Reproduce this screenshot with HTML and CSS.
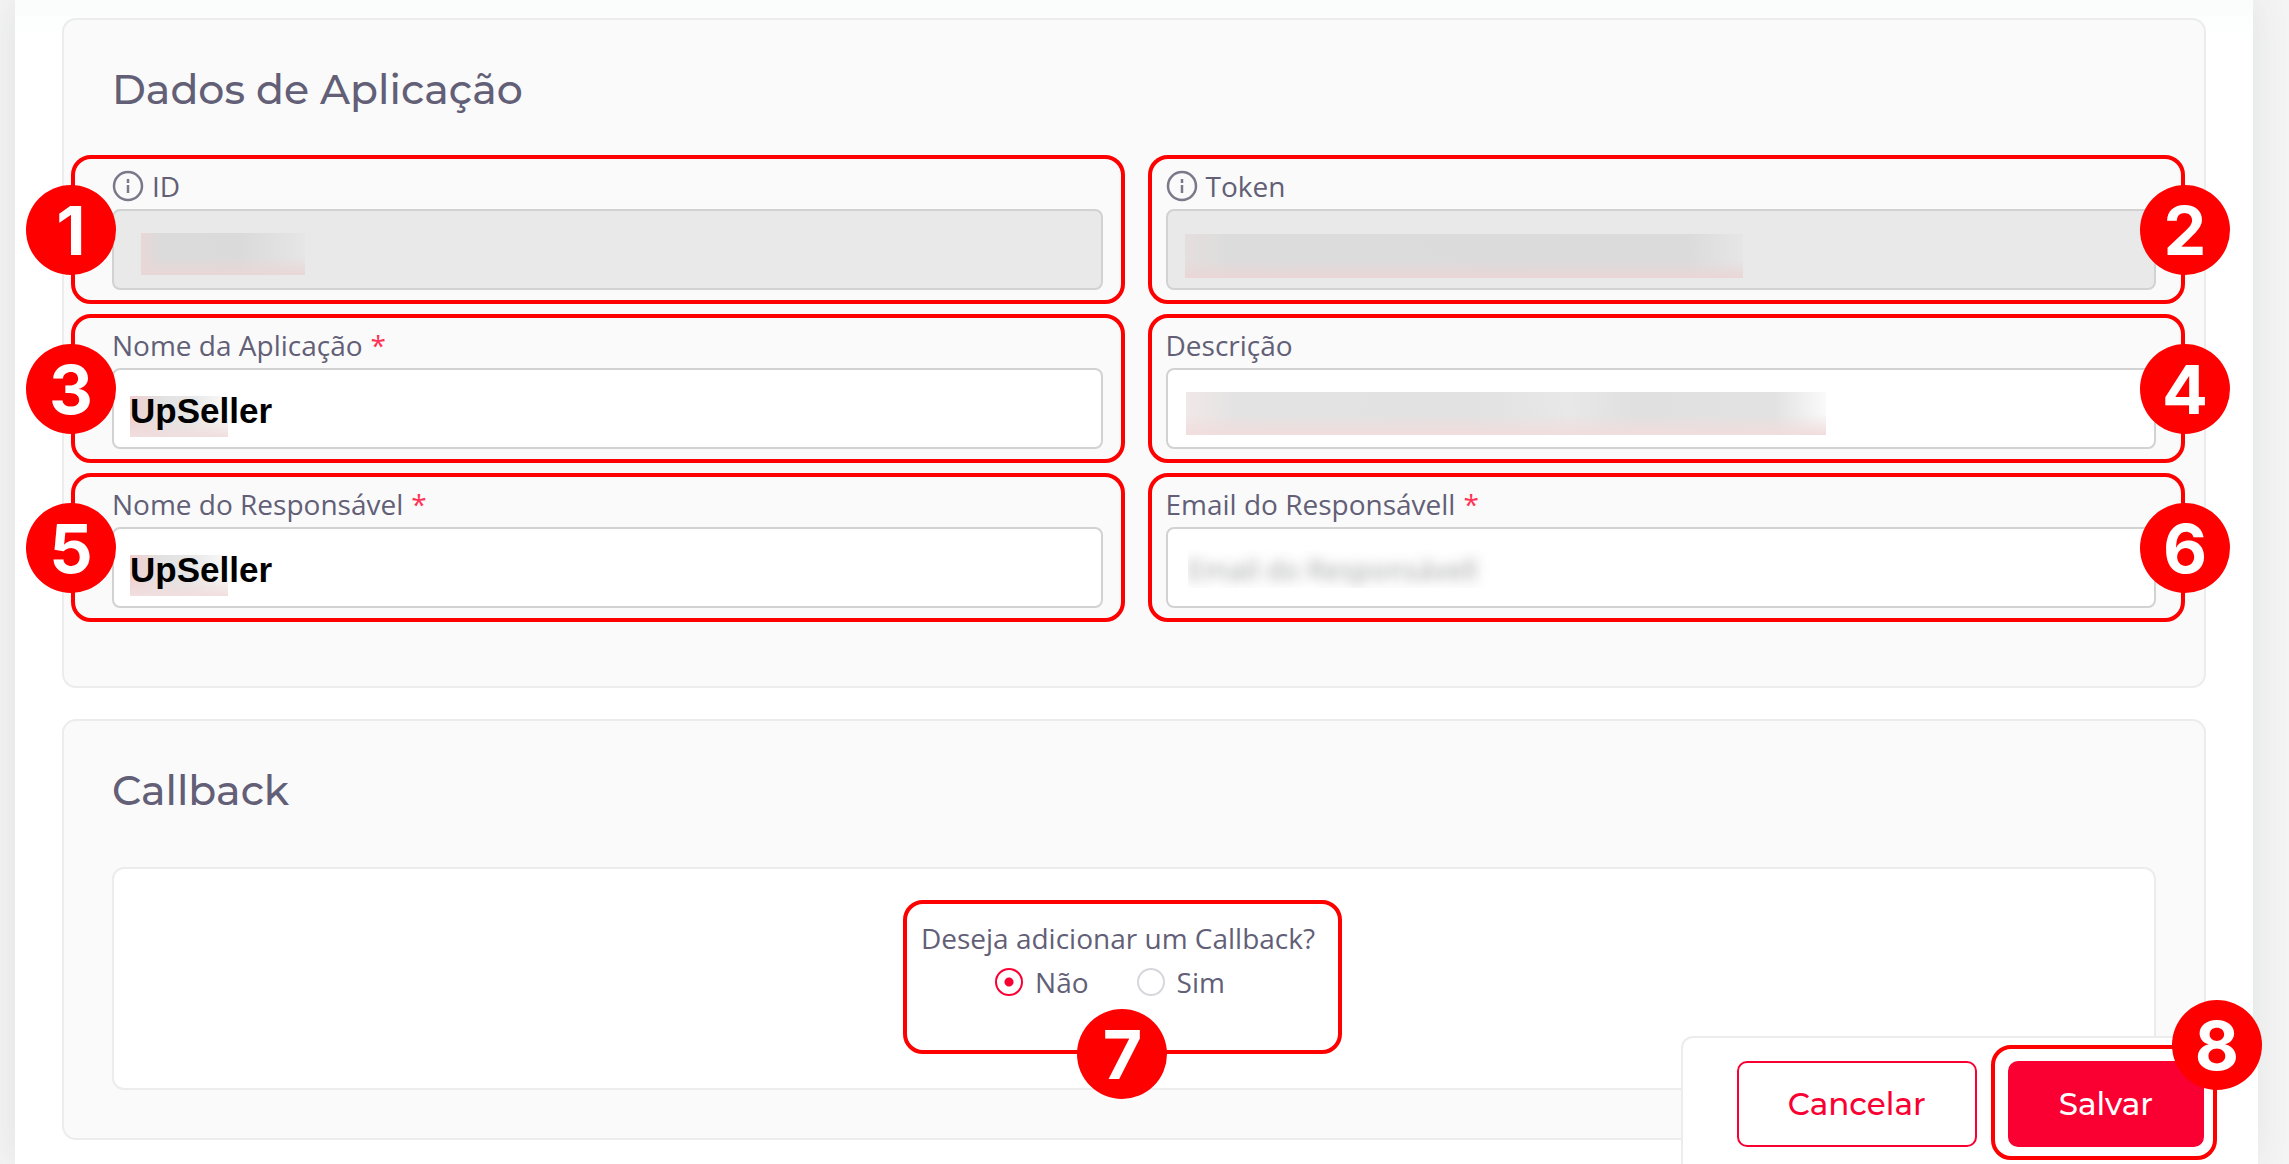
FILE: index.html
```
<!DOCTYPE html>
<html lang="pt-BR">
<head>
  <meta charset="utf-8">
  <meta name="viewport" content="width=device-width, initial-scale=1">
  <title>Dados de Aplicação</title>
  <link rel="stylesheet" href="styles.css">
</head>
<body>
  <form class="page">
    <section class="panel panel-dados">
      <h2>Dados de Aplicação</h2>
      <div class="fields">
        <div class="field">
          <label for="id">
            <svg class="info" viewBox="0 0 32 32"><circle cx="16" cy="16" r="14"/><path d="M16 15v8M16 9v4"/></svg>
            ID
          </label>
          <input type="text" id="id" class="hidden-id" disabled>
          <div class="mark mark-left"><span class="badge">1</span></div>
        </div>
        <div class="field">
          <label for="token">
            <svg class="info" viewBox="0 0 32 32"><circle cx="16" cy="16" r="14"/><path d="M16 15v8M16 9v4"/></svg>
            Token
          </label>
          <input type="text" id="token" class="hidden-token" disabled>
          <div class="mark mark-right"><span class="badge">2</span></div>
        </div>
        <div class="field">
          <label for="nome">Nome da Aplicação <span class="required">*</span></label>
          <input type="text" id="nome" class="hidden-nome" value="UpSeller">
          <div class="mark mark-left"><span class="badge">3</span></div>
        </div>
        <div class="field">
          <label for="descricao">Descrição</label>
          <input type="text" id="descricao" class="hidden-descricao">
          <div class="mark mark-right"><span class="badge">4</span></div>
        </div>
        <div class="field">
          <label for="responsavel">Nome do Responsável <span class="required">*</span></label>
          <input type="text" id="responsavel" class="hidden-nome" value="UpSeller">
          <div class="mark mark-left"><span class="badge">5</span></div>
        </div>
        <div class="field">
          <label for="email">Email do Responsávell <span class="required">*</span></label>
          <input type="email" id="email" placeholder="Email do Responsávell">
          <div class="mark mark-right"><span class="badge">6</span></div>
        </div>
      </div>
    </section>

    <section class="panel panel-callback">
      <h2>Callback</h2>
      <div class="callback">
        <fieldset class="question">
          <legend>Deseja adicionar um Callback?</legend>
          <div class="options">
            <label><input type="radio" name="callback" value="nao" checked>Não</label>
            <label><input type="radio" name="callback" value="sim">Sim</label>
          </div>
          <div class="mark mark-question"><span class="badge">7</span></div>
        </fieldset>
      </div>
    </section>

    <div class="actions">
      <button type="button" class="btn btn-cancel">Cancelar</button>
      <div class="save">
        <button type="submit" class="btn btn-save">Salvar</button>
        <div class="mark mark-save"><span class="badge">8</span></div>
      </div>
    </div>
  </form>
</body>
</html>
```
FILE: styles.css
```
* {
  box-sizing: border-box;
}
body {
  margin: 0;
  padding: 0 36px 0 15px;
  overflow-x: hidden;
  background-color: #f4f4f4;
  color: #625f77;
  font-family: "Segoe UI", "Open Sans", "Noto Sans", sans-serif;
  font-size: 28px;
  line-height: 40px;
}
.page {
  min-height: 100vh;
  padding: 18px 47px 20px;
  background: #fff linear-gradient(#fafcfb, #fff 40px) no-repeat;
  box-shadow: 0 0 36px rgba(60,70,65,.1);
}
.panel {
  padding: 45px 48px 48px;
  border: 2px solid #ececec;
  border-radius: 14px;
  background-color: #fafafa;
}
.panel-dados {
  padding-bottom: 78px;
}
.panel-callback {
  margin-top: 31px;
}
h2 {
  margin: 0 0 53px;
  font-family: Montserrat, Inter, sans-serif;
  font-size: 41px;
  font-weight: 500;
  line-height: 48px;
}

/* form fields */
.fields {
  display: grid;
  grid-template-columns: 1fr 1fr;
  gap: 35px 63px;
}
.field {
  position: relative;
}
.field label {
  display: flex;
  align-items: center;
  gap: 8px;
  margin-bottom: 3px;
}
.info {
  width: 32px;
  height: 32px;
  fill: none;
  stroke: #7b788a;
  stroke-width: 2.5;
}
.required {
  color: #ff3355;
}
.field input {
  display: block;
  width: 100%;
  height: 81px;
  padding: 4px 16px 0;
  border: 2px solid #d2d2d2;
  border-radius: 8px;
  background-color: #fff;
  background-repeat: no-repeat;
  color: #000;
  font-family: Arial, "Liberation Sans", sans-serif;
  font-size: 35px;
  font-weight: bold;
}
.field input:disabled {
  background-color: #e9e9e9;
}
.field input[type=email] {
  padding: 0 20px;
}
.field input::placeholder {
  color: transparent;
  font-family: "Segoe UI", "Open Sans", "Noto Sans", sans-serif;
  font-size: 28px;
  font-weight: normal;
  text-shadow: 0 0 12px rgba(70,75,72,.5);
  opacity: 1;
}

/* masked values */
.field .hidden-id {
  background-image: linear-gradient(rgba(233,215,215,0) 55%, #e9d7d7), linear-gradient(90deg, #e9d7d7, #dbdbdb 12%, #dadada 60%, #e6e6e6);
  background-position: 27px 22px;
  background-size: 164px 42px;
}
.field .hidden-token {
  background-image: linear-gradient(rgba(233,213,213,0) 60%, #ead6d6), linear-gradient(90deg, #e5dede, #dcdcdc 8%, #dbdbdb 90%, #e6e6e6);
  background-position: 17px 23px;
  background-size: 558px 44px;
}
.field .hidden-nome {
  background-image: linear-gradient(rgba(243,222,222,0) 50%, #f1dede), linear-gradient(90deg, #f0cfcf, #e2e2e2 35%, #e6e6e6 60%, #fafafa);
  background-position: 16px 26px;
  background-size: 98px 41px;
}
.field .hidden-descricao {
  background-image: linear-gradient(rgba(243,222,222,0) 50%, #f1dddd), linear-gradient(90deg, #f1e8e8, #e3e3e3 8%, #e2e2e2 45%, #e8e8e8 60%, #e0e0e0 70%, #e2e2e2 92%, #fafafa);
  background-position: 18px 22px;
  background-size: 640px 43px;
}

/* callback */
.callback {
  display: flex;
  justify-content: center;
  padding: 49px 32px 86px 0;
  border: 2px solid #ececec;
  border-radius: 12px;
  background-color: #fff;
}
.question {
  position: relative;
  margin: 0;
  padding: 0;
  border: 0;
}
.question legend {
  padding: 0;
}
.options {
  display: flex;
  justify-content: center;
  gap: 48px;
  margin-top: 4px;
  padding-right: 16px;
}
.options label {
  display: flex;
  align-items: center;
  gap: 12px;
}
.options input {
  appearance: none;
  width: 28px;
  height: 28px;
  margin: 0;
  border: 2px solid #d8d6dc;
  border-radius: 50%;
  background-color: #fff;
}
.options input:checked {
  border-color: #fa0032;
  background-image: radial-gradient(circle, #fa0032 4px, transparent 5px);
}

/* bottom bar */
.actions {
  position: fixed;
  right: 31px;
  bottom: 0;
  display: flex;
  gap: 31px;
  padding: 23px 54px 17px;
  border: 2px solid #ececec;
  border-width: 2px 0 0 2px;
  border-radius: 12px 0 0 0;
  background-color: #fff;
}
.save {
  position: relative;
}
.btn {
  height: 86px;
  padding: 0 49px;
  border: 2px solid #fa0032;
  border-radius: 10px;
  font-family: Montserrat, Inter, sans-serif;
  font-size: 31px;
  font-weight: 500;
}
.btn-cancel {
  background-color: #fff;
  color: #fa0032;
}
.btn-save {
  background-color: #fa0032;
  color: #fff;
}

/* numbered marks */
.mark {
  position: absolute;
  border: 4px solid #f00;
  border-radius: 20px;
  pointer-events: none;
}
.mark-left {
  top: -11px;
  right: -22px;
  bottom: -14px;
  left: -41px;
}
.mark-right {
  top: -11px;
  right: -29px;
  bottom: -14px;
  left: -18px;
}
/* the legend is outside the fieldset's box, so go up over it */
.mark-question {
  top: -58px;
  right: -27px;
  bottom: -52px;
  left: -18px;
}
.mark-save {
  top: -16px;
  right: -13px;
  bottom: -13px;
  left: -17px;
}
.badge {
  position: absolute;
  top: calc(50% - 45px);
  width: 90px;
  height: 90px;
  border-radius: 50%;
  background-color: #f00;
  color: #fff;
  font-family: Inter, sans-serif;
  font-size: 68px;
  font-weight: bold;
  line-height: 90px;
  text-align: center;
}
.mark-left .badge {
  left: -49px;
}
.mark-right .badge {
  right: -49px;
}
.mark-question .badge {
  top: auto;
  bottom: -49px;
  left: calc(50% - 45px);
}
.mark-save .badge {
  top: -49px;
  right: -49px;
}
```
